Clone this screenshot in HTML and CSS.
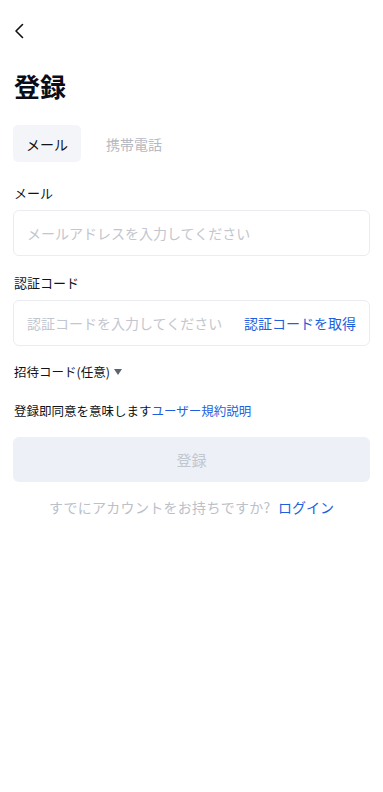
FILE: index.html
```html
<!DOCTYPE html>
<html lang="ja">
<head>
<meta charset="utf-8">
<title>登録</title>
<link rel="stylesheet" href="styles.css">
</head>
<body>
<div class="page">
  <div class="header">
    <svg class="back" width="12" height="16" viewBox="0 0 12 16"><path d="M9.5 1.5 L3 8 L9.5 14.5" fill="none" stroke="#111" stroke-width="1.6" stroke-linecap="round" stroke-linejoin="round"/></svg>
  </div>
  <h1 class="title">登録</h1>
  <div class="tabs">
    <div class="tab active">メール</div>
    <div class="tab">携帯電話</div>
  </div>
  <div class="label">メール</div>
  <div class="field"><span class="ph">メールアドレスを入力してください</span></div>
  <div class="label label2">認証コード</div>
  <div class="field"><span class="ph">認証コードを入力してください</span><span class="link">認証コードを取得</span></div>
  <div class="invite">招待コード(任意)<span class="tri"></span></div>
  <div class="agree">登録即同意を意味します<span class="link">ユーザー規約説明</span></div>
  <div class="btn">登録</div>
  <div class="login">すでにアカウントをお持ちですか? <span class="link login-link">ログイン</span></div>
</div>
</body>
</html>
```

FILE: styles.css
```css
* { box-sizing: border-box; }
body {
  margin: 0;
  background: #fff;
  font-family: "Noto Sans CJK JP", "Noto Sans", sans-serif;
  color: #111318;
}
.page { padding: 0 13px; }
.header {
  height: 62px;
  display: flex;
  align-items: center;
}
.back { display: block; margin-left: 0; }
.title {
  margin: 6px 0 0 1px;
  font-size: 26px;
  line-height: 36px;
  font-weight: 700;
  color: #0a0d17;
}
.tabs {
  display: flex;
  gap: 12px;
  margin-top: 21px;
}
.tab {
  height: 37px;
  padding: 0 13px;
  display: flex;
  align-items: center;
  font-size: 14px;
  color: #b5b9c3;
  border-radius: 5px;
}
.tab.active {
  background: #f4f5f9;
  color: #111318;
}
.label {
  margin: 22px 0 0 1px;
  font-size: 13px;
  line-height: 18px;
  color: #111318;
}
.label2 { margin-top: 18px; }
.field {
  margin-top: 8px;
  height: 46px;
  border: 1px solid #eaecf0;
  border-radius: 6px;
  padding: 0 13px;
  display: flex;
  align-items: center;
  justify-content: space-between;
  font-size: 14px;
}
.ph { color: #c3c6ce; }
.link { color: #1d5fdd; }
.invite {
  margin: 17px 0 0 1px;
  font-size: 12.5px;
  line-height: 18px;
  display: flex;
  align-items: center;
}
.tri {
  width: 0;
  height: 0;
  margin-left: 4px;
  border-left: 4px solid transparent;
  border-right: 4px solid transparent;
  border-top: 6px solid #5d6370;
}
.agree {
  margin: 21px 0 0 1px;
  font-size: 12.5px;
  line-height: 18px;
}
.btn {
  margin-top: 17px;
  height: 45px;
  border-radius: 6px;
  background: #edf0f7;
  color: #c2c6cf;
  font-size: 15px;
  display: flex;
  align-items: center;
  justify-content: center;
}
.login {
  margin-top: 15px;
  text-align: center;
  font-size: 14px;
  line-height: 20px;
  letter-spacing: 0.3px;
  color: #bcc0c8;
}
.login-link {
  margin-left: 4px;
  letter-spacing: 0;
}
```
